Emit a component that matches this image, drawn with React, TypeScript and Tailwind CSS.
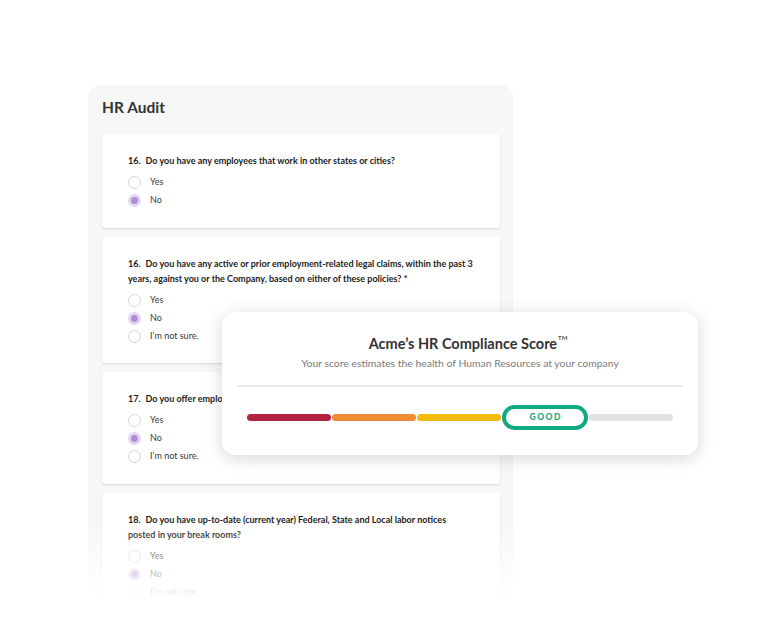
import React from "react";

type Q = {
  num: string;
  lines: string[];
  options: string[];
  selected: number;
  pb: string;
};

const questions: Q[] = [
  { num: "16.", lines: ["Do you have any employees that work in other states or cities?"], options: ["Yes", "No"], selected: 1, pb: "pb-[19px]" },
  {
    num: "16.",
    lines: [
      "Do you have any active or prior employment-related legal claims, within the past 3",
      "years, against you or the Company, based on either of these policies? *",
    ],
    options: ["Yes", "No", "I’m not sure."],
    selected: 1,
    pb: "pb-[18px]",
  },
  { num: "17.", lines: ["Do you offer employee benefits such as health insurance?"], options: ["Yes", "No", "I’m not sure."], selected: 1, pb: "pb-[19px]" },
  {
    num: "18.",
    lines: [
      "Do you have up-to-date (current year) Federal, State and Local labor notices",
      "posted in your break rooms?",
    ],
    options: ["Yes", "No", "I’m not sure."],
    selected: 1,
    pb: "pb-[19px]",
  },
];

function Radio({ checked }: { checked: boolean }) {
  if (checked) {
    return (
      <span className="flex h-[13px] w-[13px] items-center justify-center rounded-full bg-[#e3d6f0]">
        <span className="h-[7px] w-[7px] rounded-full bg-[#b08ed3]" />
      </span>
    );
  }
  return <span className="h-[13px] w-[13px] rounded-full border border-[#d6d6d6] bg-white" />;
}

function QuestionCard({ q }: { q: Q }) {
  return (
    <div className={`rounded-[3px] bg-white pl-[26px] pr-[16px] pt-[19px] shadow-[0_1px_2px_rgba(0,0,0,0.14)] ${q.pb}`}>
      <p className="whitespace-nowrap text-[9px] font-bold leading-[15px] text-[#1c1c1c]">
        {q.lines.map((l, i) => (
          <React.Fragment key={i}>
            {i === 0 ? (
              <>
                {q.num}
                <span className="inline-block w-[5px]" />
                {l}
              </>
            ) : (
              l
            )}
            {i < q.lines.length - 1 && <br />}
          </React.Fragment>
        ))}
      </p>
      <div className="mt-[5px] flex flex-col">
        {q.options.map((o, i) => (
          <div key={o} className="flex h-[18px] items-center gap-[9px]">
            <Radio checked={i === q.selected} />
            <span className="text-[9px] text-[#3a3a3a]">{o}</span>
          </div>
        ))}
      </div>
    </div>
  );
}

export default function App() {
  const segs = ["bg-[#b32240]", "bg-[#ee8b34]", "bg-[#f3bc0d]"];
  return (
    <div
      className="relative h-[639px] w-[775px] overflow-hidden bg-white"
      style={{ fontFamily: "Lato, 'Liberation Sans', sans-serif" }}
    >
      <div className="relative ml-[88px] mt-[85px] h-[511px] w-[425px] overflow-hidden rounded-[12px] bg-[#f7f7f7] pl-[14px] pr-[13px]">
        <h1 className="pt-[12px] text-[15.5px] font-bold leading-[20px] text-[#333333]">HR Audit</h1>
        <div className="mt-[17px] flex flex-col gap-[9px]">
          {questions.map((q, i) => (
            <QuestionCard key={i} q={q} />
          ))}
        </div>
        <div className="absolute bottom-0 left-0 right-0 h-[74px] bg-gradient-to-b from-white/0 to-white/95" />
      </div>

      <div className="absolute left-[222px] top-[312px] h-[143px] w-[476px] rounded-[13px] bg-white shadow-[0_3px_18px_rgba(0,0,0,0.16)]">
        <div className="flex flex-col items-center pt-[22px]">
          <div className="ml-[16px] flex items-start text-[14.5px] font-bold leading-[20px] text-[#333333]">
            Acme’s HR Compliance Score
            <span className="ml-[1px] text-[6px] leading-[8px] text-[#555555]">TM</span>
          </div>
          <div className="mt-[2px] text-[10.4px] leading-[14px] text-[#7a7a7a]">
            Your score estimates the health of Human Resources at your company
          </div>
        </div>
        <div className="mx-[15px] mt-[15px] h-[2px] bg-[#ebebeb]" />
        <div className="ml-[25px] mt-[18px] flex items-center gap-[1px]">
          {segs.map((c) => (
            <div key={c} className={`h-[7px] w-[84px] shrink-0 rounded-full ${c}`} />
          ))}
          <div className="flex h-[25px] w-[86px] shrink-0 items-center justify-center rounded-full border-[4px] border-[#0fa982] bg-white">
            <span className="pl-[1.5px] text-[8.5px] font-black tracking-[1.5px] text-[#1aa884]">GOOD</span>
          </div>
          <div className="h-[7px] w-[84px] shrink-0 rounded-full bg-[#e2e2e2]" />
        </div>
      </div>
    </div>
  );
}
